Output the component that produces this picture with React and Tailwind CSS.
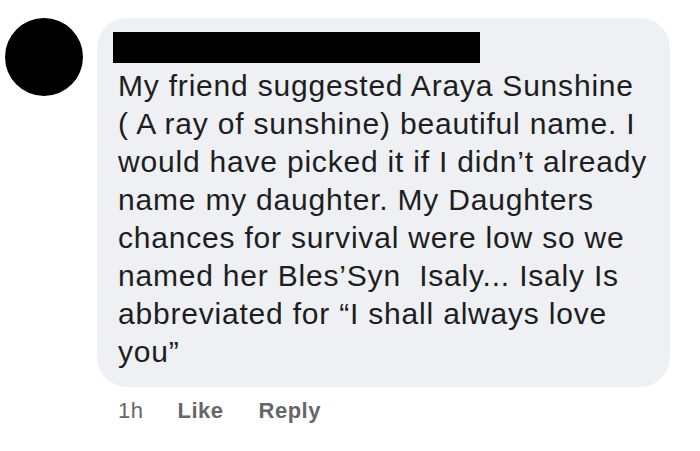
import React from 'react';

const lines = [
  'My friend suggested Araya Sunshine',
  '( A ray of sunshine) beautiful name. I',
  'would have picked it if I didn\u2019t already',
  'name my daughter. My Daughters',
  'chances for survival were low so we',
  'named her Bles\u2019Syn  Isaly... Isaly Is',
  'abbreviated for \u201cI shall always love',
  'you\u201d',
];

export default function App() {
  return (
    <div className="w-[700px] h-[451px] bg-white overflow-hidden font-['Liberation_Sans',Arial,sans-serif]">
      <div className="flex items-start">
        {/* avatar */}
        <div className="ml-[5px] mt-[18px] w-[78px] h-[78px] rounded-full bg-black shrink-0" />
        <div className="ml-[14px] mt-[18px]">
          {/* comment bubble */}
          <div className="w-[573px] rounded-[30px] bg-[#eef0f3] pl-[21px] pt-[14px] pb-[16px]">
            <div className="ml-[-5px] w-[367px] h-[31px] bg-black" />
            <div className="mt-[4px] text-[30px] leading-[38px] tracking-[0.8px] text-[#1c1e21] whitespace-pre">
              {lines.map((l, i) => (
                <div key={i}>{l}</div>
              ))}
            </div>
          </div>
          {/* actions */}
          <div className="flex items-baseline pl-[21px] mt-[11px] text-[22px] leading-[26px] tracking-[0.5px] text-[#65676b]">
            <span>1h</span>
            <span className="ml-[34px] font-semibold">Like</span>
            <span className="ml-[35px] font-semibold">Reply</span>
          </div>
        </div>
      </div>
    </div>
  );
}
